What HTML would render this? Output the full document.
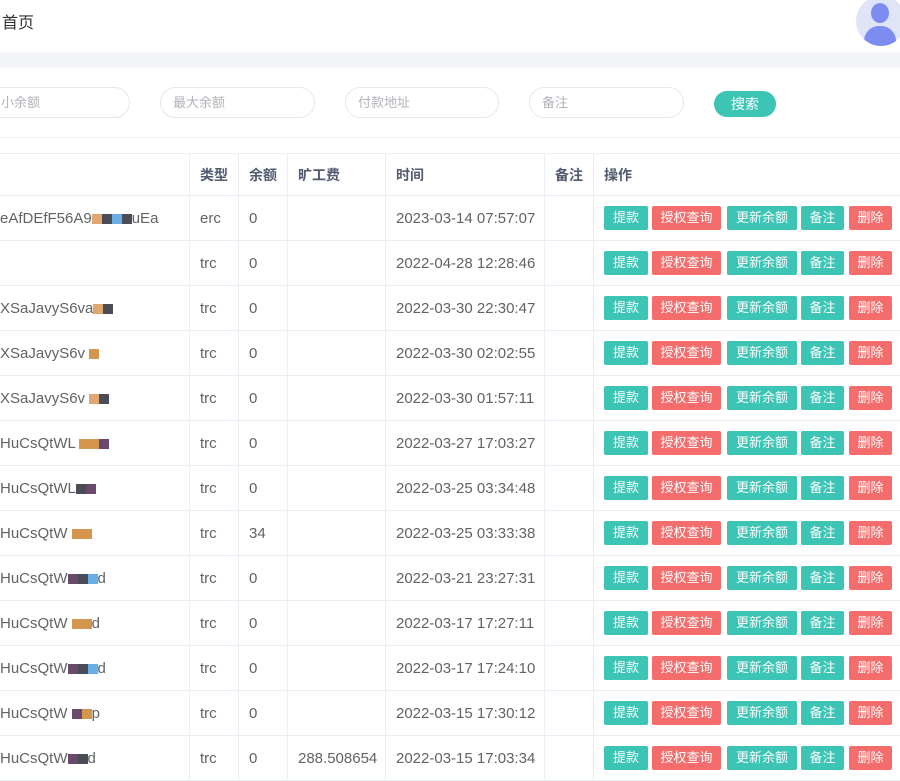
<!DOCTYPE html>
<html><head><meta charset="utf-8"><style>
*{margin:0;padding:0;box-sizing:border-box}
body{width:900px;height:780px;overflow:hidden;background:#fff;font-family:"Liberation Sans","Noto Sans CJK SC",sans-serif;color:#606266;position:relative}
.hdr{position:absolute;left:0;top:0;width:900px;height:52px;background:#fff}
.hdr .t{position:absolute;left:2px;top:9px;font-size:16px;color:#303133}
.av{position:absolute;left:856px;top:-4px;width:50px;height:50px;border-radius:50%;background:#dfe5f7;overflow:hidden}
.av .h{position:absolute;left:15px;top:7px;width:18px;height:20px;border-radius:50%;background:#7c8cf0}
.av .b{position:absolute;left:8px;top:30px;width:32px;height:20px;border-radius:15px 15px 4px 4px;background:#7c8cf0}
.band{position:absolute;left:0;top:52px;width:900px;height:16px;background:#f3f4f8}
.inp{position:absolute;top:87px;height:31px;border:1px solid #e4e7ed;border-radius:16px;font-size:13px;color:#b0b3b8;line-height:29px;padding-left:12px}
.sbtn{position:absolute;left:714px;top:91px;width:62px;height:26px;border-radius:13px;background:#3cc5b5;color:#fff;font-size:14px;text-align:center;line-height:26px}
.sep{position:absolute;left:0;top:137px;width:900px;height:1px;background:#f0f0f0}
table{position:absolute;left:-1px;top:153px;border-collapse:collapse;font-size:15px;table-layout:fixed;width:913px}
td,th{border:1px solid #ebeef5;height:45px;padding:0 10px;text-align:left;white-space:nowrap;overflow:hidden}
th{height:42px;font-weight:bold;color:#515a6e;font-size:14px}
td.a{padding-left:0}
td.op{padding-left:10px}
.bt{display:inline-block;height:24px;line-height:24px;font-size:13px;color:#fff;text-align:center;border-radius:2px;vertical-align:middle}
.g{background:#3cc5b5}.r{background:#f56c6c}
.pix{display:inline-block;width:10px;height:10px;vertical-align:middle}
</style></head><body>
<div class="hdr"><div class="t">首页</div><div class="av"><div class="h"></div><div class="b"></div></div></div>
<div class="band"></div>
<div class="inp" style="left:-20px;width:150px;padding-left:20px">小余额</div>
<div class="inp" style="left:160px;width:155px">最大余额</div>
<div class="inp" style="left:345px;width:154px">付款地址</div>
<div class="inp" style="left:529px;width:155px">备注</div>
<div class="sbtn">搜索</div>
<div class="sep"></div>
<table>
<colgroup><col style="width:190px"><col style="width:49px"><col style="width:49px"><col style="width:98px"><col style="width:159px"><col style="width:49px"><col style="width:319px"></colgroup>
<tr><th></th><th>类型</th><th>余额</th><th>旷工费</th><th>时间</th><th>备注</th><th>操作</th></tr>
<tr><td class="a">eAfDEfF56A9<span class="pix" style="background:#e0a870"></span><span class="pix" style="background:#4a4d55"></span><span class="pix" style="background:#6aaee8"></span><span class="pix" style="background:#4a4d55"></span>uEa</td><td>erc</td><td>0</td><td></td><td>2023-03-14 07:57:07</td><td></td><td class="op">OPS</td></tr>
<tr><td class="a"></td><td>trc</td><td>0</td><td></td><td>2022-04-28 12:28:46</td><td></td><td class="op">OPS</td></tr>
<tr><td class="a">XSaJavyS6va<span class="pix" style="background:#e0a870"></span><span class="pix" style="background:#4a4d55"></span></td><td>trc</td><td>0</td><td></td><td>2022-03-30 22:30:47</td><td></td><td class="op">OPS</td></tr>
<tr><td class="a">XSaJavyS6v <span class="pix" style="background:#d4954f"></span></td><td>trc</td><td>0</td><td></td><td>2022-03-30 02:02:55</td><td></td><td class="op">OPS</td></tr>
<tr><td class="a">XSaJavyS6v <span class="pix" style="background:#e0a870"></span><span class="pix" style="background:#4a4d55"></span></td><td>trc</td><td>0</td><td></td><td>2022-03-30 01:57:11</td><td></td><td class="op">OPS</td></tr>
<tr><td class="a">HuCsQtWL <span class="pix" style="background:#d4954f"></span><span class="pix" style="background:#d4954f"></span><span class="pix" style="background:#6a4a6a"></span></td><td>trc</td><td>0</td><td></td><td>2022-03-27 17:03:27</td><td></td><td class="op">OPS</td></tr>
<tr><td class="a">HuCsQtWL<span class="pix" style="background:#4a4d55"></span><span class="pix" style="background:#6a4a6a"></span></td><td>trc</td><td>0</td><td></td><td>2022-03-25 03:34:48</td><td></td><td class="op">OPS</td></tr>
<tr><td class="a">HuCsQtW <span class="pix" style="background:#d4954f"></span><span class="pix" style="background:#d4954f"></span></td><td>trc</td><td>34</td><td></td><td>2022-03-25 03:33:38</td><td></td><td class="op">OPS</td></tr>
<tr><td class="a">HuCsQtW<span class="pix" style="background:#6a4a6a"></span><span class="pix" style="background:#4a4d55"></span><span class="pix" style="background:#6aaee8"></span>d</td><td>trc</td><td>0</td><td></td><td>2022-03-21 23:27:31</td><td></td><td class="op">OPS</td></tr>
<tr><td class="a">HuCsQtW <span class="pix" style="background:#d4954f"></span><span class="pix" style="background:#d4954f"></span>d</td><td>trc</td><td>0</td><td></td><td>2022-03-17 17:27:11</td><td></td><td class="op">OPS</td></tr>
<tr><td class="a">HuCsQtW<span class="pix" style="background:#6a4a6a"></span><span class="pix" style="background:#4a4d55"></span><span class="pix" style="background:#6aaee8"></span>d</td><td>trc</td><td>0</td><td></td><td>2022-03-17 17:24:10</td><td></td><td class="op">OPS</td></tr>
<tr><td class="a">HuCsQtW <span class="pix" style="background:#6a4a6a"></span><span class="pix" style="background:#d4954f"></span>p</td><td>trc</td><td>0</td><td></td><td>2022-03-15 17:30:12</td><td></td><td class="op">OPS</td></tr>
<tr><td class="a">HuCsQtW<span class="pix" style="background:#6a4a6a"></span><span class="pix" style="background:#4a4d55"></span>d</td><td>trc</td><td>0</td><td>288.508654</td><td>2022-03-15 17:03:34</td><td></td><td class="op">OPS</td></tr>
</table>
<script>
var h='<span class="bt g" style="width:44px">提款</span><span class="bt r" style="width:69px;margin-left:4px">授权查询</span><span class="bt g" style="width:70px;margin-left:6px">更新余额</span><span class="bt g" style="width:43px;margin-left:4px">备注</span><span class="bt r" style="width:43px;margin-left:5px">删除</span>';
document.querySelectorAll('td.op').forEach(function(t){t.innerHTML=h;});
</script>
</body></html>
